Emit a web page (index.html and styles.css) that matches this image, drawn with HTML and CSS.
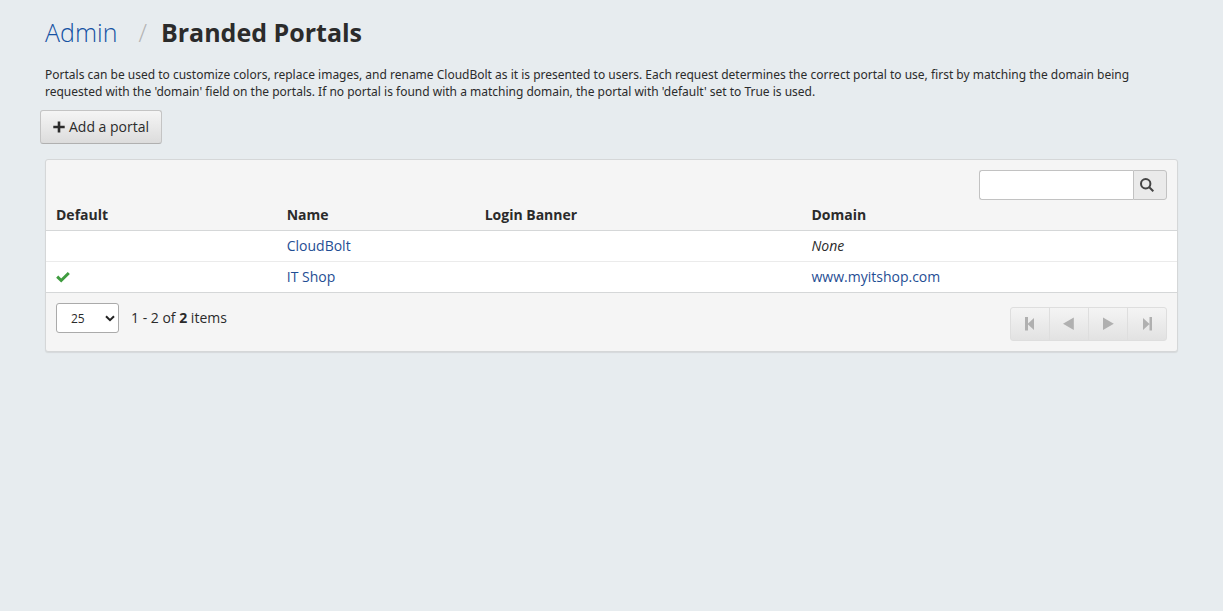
FILE: index.html
```html
<!DOCTYPE html>
<html lang="en">
<head>
<meta charset="utf-8">
<meta name="viewport" content="width=device-width, initial-scale=1">
<title>Branded Portals</title>
<link rel="stylesheet" href="styles.css">
</head>
<body>
<main class="page">
  <header class="heading">
    <a class="crumb" href="#">Admin</a>
    <span class="slash">/</span>
    <h1 class="title">Branded Portals</h1>
  </header>
  <p class="intro">Portals can be used to customize colors, replace images, and rename CloudBolt as it is presented to users. Each request determines the correct portal to use, first by matching the domain being requested with the 'domain' field on the portals. If no portal is found with a matching domain, the portal with 'default' set to True is used.</p>
  <button class="add" type="button">
    <svg class="plus" viewBox="0 0 12 12" aria-hidden="true"><path d="M4.7 0.5h2.600v4.200h4.400v2.600H7.300v4.200H4.700V7.300H0.300V4.700h4.400z"/></svg>
    <span>Add a portal</span>
  </button>
  <section class="panel">
    <form class="search" role="search">
      <input class="search-input" type="text" aria-label="Search portals">
      <button class="search-button" type="button" aria-label="Search">
        <svg viewBox="0 0 14 14" aria-hidden="true"><circle cx="5.700" cy="5.700" r="4.700"/><path d="M9 9l4.300 4.300"/></svg>
      </button>
    </form>
    <table class="portals">
      <colgroup><col class="col-default"><col class="col-name"><col class="col-banner"><col></colgroup>
      <thead>
        <tr><th scope="col">Default</th><th scope="col">Name</th><th scope="col">Login Banner</th><th scope="col">Domain</th></tr>
      </thead>
      <tbody>
        <tr><td></td><td><a href="#">CloudBolt</a></td><td></td><td><em>None</em></td></tr>
        <tr>
          <td><svg class="check" viewBox="0 0 14 13" role="img" aria-label="Default"><path d="M1.200 5.600l4 3.900 7.600-7.500"/></svg></td>
          <td><a href="#">IT Shop</a></td><td></td><td><a href="#">www.myitshop.com</a></td>
        </tr>
      </tbody>
    </table>
    <footer class="footer">
      <div class="count">
        <span class="select-wrap">
          <select class="size" aria-label="Items per page"><option>25</option><option>50</option><option>100</option></select>
          <svg class="chevron" viewBox="0 0 10 7" aria-hidden="true"><path d="M1 1.200l4 4 4-4"/></svg>
        </span>
        <span>1 - 2 of <strong>2</strong> items</span>
      </div>
      <nav class="pager" aria-label="Pages">
        <button type="button" disabled aria-label="First page"><svg viewBox="0 0 14 14"><path d="M2 0h3v13.500H2zM11 1v12L4.500 7z"/></svg></button>
        <button type="button" disabled aria-label="Previous page"><svg viewBox="0 0 14 14"><path d="M11.800 0.500v12.500L1 6.700z"/></svg></button>
        <button type="button" disabled aria-label="Next page"><svg viewBox="0 0 14 14"><path d="M2 0.500v12.500l10.800-6.300z"/></svg></button>
        <button type="button" disabled aria-label="Last page"><svg viewBox="0 0 14 14"><path d="M9.500 0h2.500v13.500H9.500zM3 1v12l6.500-6z"/></svg></button>
      </nav>
    </footer>
  </section>
</main>
</body>
</html>
```
FILE: styles.css
```css
* {
  box-sizing: border-box;
}

body {
  margin: 0;
  background: #e7ecef;
  color: #2b2b2b;
  font: 14px/20px "Open Sans", "Noto Sans", sans-serif;
}

a {
  color: #1f4e94;
  text-decoration: none;
}

svg {
  display: block;
}

button,
input,
select {
  font: inherit;
  color: inherit;
}

.page {
  padding: 15px 45px;
}

.heading {
  display: flex;
  align-items: baseline;
  font-size: 25px;
  line-height: 34px;
}

.crumb {
  color: #1552a3;
  font-weight: 300;
}

.slash {
  margin: 0 14px 0 21px;
  color: #b3b3b3;
  font-weight: 300;
}

.title {
  margin: 0;
  font-size: inherit;
  font-weight: 700;
}

.intro {
  margin: 17px 0 10px;
  font-family: "Noto Sans", "Open Sans", sans-serif;
  font-size: 12px;
  line-height: 17px;
}

.add {
  display: flex;
  align-items: center;
  gap: 4px;
  height: 34px;
  margin: 0 0 15px -5px;
  padding: 0 12px;
  border: 1px solid #c4c4c4;
  border-bottom-color: #b0b0b0;
  border-radius: 3px;
  background: linear-gradient(#f5f5f5, #dcdcdc);
}

.plus {
  width: 12px;
  height: 12px;
  fill: #2b2b2b;
}

.panel {
  border: 1px solid #d5d7d8;
  border-radius: 3px;
  background: #f5f5f5;
  box-shadow: 0 1px 1px #d5d9db;
}

.search {
  display: flex;
  justify-content: flex-end;
  padding: 10px 10px 0;
}

.search-input {
  width: 154px;
  height: 30px;
  padding: 4px 8px;
  border: 1px solid #c2c2c2;
  border-right: 0;
  border-radius: 3px 0 0 3px;
  background: #fff;
}

.search-button {
  width: 34px;
  height: 30px;
  padding: 0 6px;
  border: 1px solid #c2c2c2;
  border-radius: 0 3px 3px 0;
  background: #eaeaea;
}

.search-button svg {
  width: 14px;
  height: 14px;
  fill: none;
  stroke: #444;
  stroke-width: 2;
}

.portals {
  width: 100%;
  table-layout: fixed;
  border-collapse: separate;
  border-spacing: 0;
}

.col-default {
  width: 20.4%;
}

.col-name {
  width: 17.5%;
}

.col-banner {
  width: 28.9%;
}

.portals th,
.portals td {
  padding: 5px 10px;
  text-align: left;
  border-bottom: 1px solid #d5d7d8;
}

.portals td {
  background: #fff;
}

.portals tbody tr:first-child td {
  border-bottom-color: #ebebeb;
}

.check {
  width: 14px;
  height: 13px;
  fill: none;
  stroke: #3f9c3f;
  stroke-width: 3;
}

.footer {
  display: flex;
  justify-content: space-between;
  padding: 10px;
}

.count {
  display: flex;
  align-items: center;
  align-self: flex-start;
  gap: 12px;
}

.select-wrap {
  position: relative;
}

.size {
  display: block;
  width: 63px;
  height: 30px;
  padding: 2px 14px 0;
  appearance: none;
  border: 1px solid #aaa;
  border-radius: 3px;
  background: #fff;
  font-size: 12px;
}

.chevron {
  position: absolute;
  top: 12px;
  right: 4px;
  width: 10px;
  height: 7px;
  fill: none;
  stroke: #222;
  stroke-width: 2;
  pointer-events: none;
}

.pager {
  display: flex;
  margin-top: 4px;
}

.pager button {
  display: grid;
  place-items: center;
  width: 40px;
  height: 34px;
  padding: 0;
  border: 1px solid #dedede;
  background: linear-gradient(#f4f4f4, #e2e2e2);
}

.pager button + button {
  margin-left: -1px;
}

.pager button:first-child {
  border-radius: 3px 0 0 3px;
}

.pager button:last-child {
  border-radius: 0 3px 3px 0;
}

.pager svg {
  width: 14px;
  height: 14px;
  fill: #b0b0b0;
}
```
